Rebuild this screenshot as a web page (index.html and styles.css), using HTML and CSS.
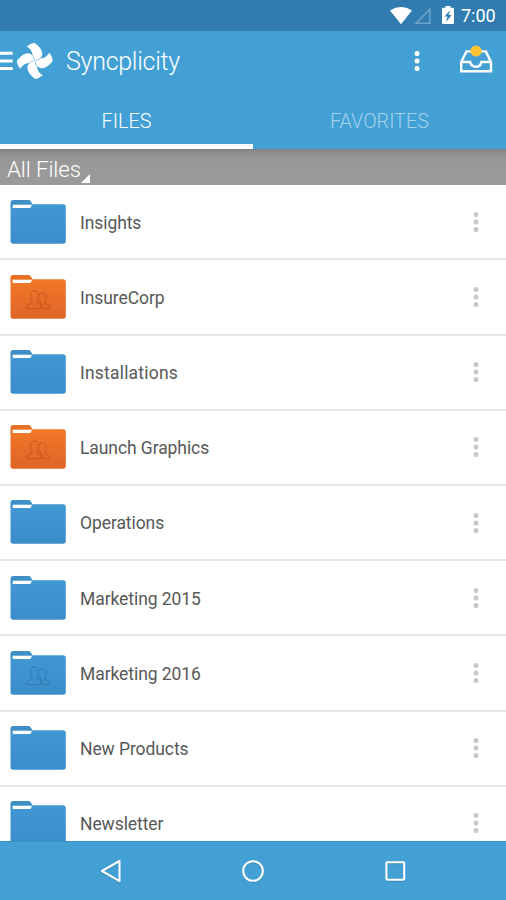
FILE: index.html
```html
<!DOCTYPE html>
<html lang="en">
<head>
<meta charset="utf-8">
<title>Syncplicity</title>
<link rel="stylesheet" href="styles.css">
</head>
<body>
<svg class="defs" aria-hidden="true">
  <defs>
    <linearGradient id="blue" x1="0" y1="0" x2="0" y2="1"><stop offset="0" stop-color="#4299d3"/><stop offset="1" stop-color="#3b8dca"/></linearGradient>
    <linearGradient id="orange" x1="0" y1="0" x2="0" y2="1"><stop offset="0" stop-color="#f47a29"/><stop offset="1" stop-color="#df6427"/></linearGradient>
    <symbol id="folder" viewBox="0 0 56 44">
      <path d="M3 0H18.5Q20 0 20.8 1.4L22.5 4.2H53Q55.8 4.2 55.8 7V41Q55.8 43.7 53 43.7H3.2Q.5 43.7 .5 41V3Q.5 0 3 0Z"/>
      <path d="M.5 3Q.5 0 3 0H18.5Q20 0 20.8 1.4L22.3 4.2H2.5V8H.5Z" fill="#000" opacity=".06"/>
      <path d="M2.7 4.7H22L20.5 7.9H2.7Z" fill="#fff"/>
    </symbol>
    <symbol id="people" viewBox="0 0 24 20">
      <path d="M14.6 18.7H1V16.3Q1 14.9 2.8 14.2L6.2 12.7V11.2C4.8 9.8 4.6 8.3 4.6 5.5C4.6 2.4 6.1 1 8.5 1S12.4 2.4 12.4 5.5C12.4 8.3 12.2 9.8 10.9 11.2V12.7L13 13.6Q14.6 14.4 14.6 16.3Z"/>
      <path d="M12.8 4.7Q14 3 16.7 3C19.1 3 20.3 4.4 20.3 6.9C20.3 9.2 20 10.6 18.9 11.8V13.2L21.8 14.5Q23.3 15.3 23.3 16.7V18.7H16.8M13.2 10.4Q13.6 11.3 14.3 12V13.4Q16.8 14.6 16.8 17V18.7"/>
    </symbol>
    <symbol id="more" viewBox="0 0 6 20"><circle cx="3" cy="2.6" r="2.5"/><circle cx="3" cy="10" r="2.5"/><circle cx="3" cy="17.4" r="2.5"/></symbol>
  </defs>
</svg>

<div class="screen">
  <div class="status">
    <svg class="wifi" viewBox="0 0 22 18"><path d="M0 3.4Q11-3.2 22 3.4L11 17.2Z" fill="#fff"/></svg>
    <svg class="signal" viewBox="0 0 18 18"><path d="M2.2 16.2H15.8V2.2Z" fill="none" stroke="#6fa5cb" stroke-width="1.5"/></svg>
    <svg class="battery" viewBox="0 0 12 18"><path d="M3.5 0H8.5V1.8H11Q12 1.8 12 2.8V17Q12 18 11 18H1Q0 18 0 17V2.8Q0 1.8 1 1.8H3.5Z" fill="#fff"/><path d="M8.2 4L2.6 10.6H5.5L4 16L9.7 9.1H6.6Z" fill="#307cb1"/></svg>
    <span class="clock">7:00</span>
  </div>

  <header class="appbar">
    <svg class="menu" viewBox="0 0 13 20"><path d="M0 2.3H12.7M0 10H12.7M0 17.5H12.7" stroke="#fff" stroke-width="3"/></svg>
    <svg class="logo" viewBox="0 0 36 38" fill="#fff">
      <path id="blade" d="M17.6 18.6C17.9 16.5 17.2 15 15.6 13.4C15.2 9.2 13.6 6.8 9.8 4.4Q13.2 1.3 17.4 .7Q25.4 6.2 25.3 12.8C24.6 15.6 22.2 17.8 17.6 18.6Z"/>
      <use href="#blade" transform="rotate(90 17.8 18.8)"/>
      <use href="#blade" transform="rotate(180 17.8 18.8)"/>
      <use href="#blade" transform="rotate(270 17.8 18.8)"/>
    </svg>
    <h1 class="title">Syncplicity</h1>
    <svg class="overflow"><use href="#more"/></svg>
    <svg class="inbox" viewBox="0 0 34 30">
      <path d="M2.2 17L7.5 6.4H26.8L32 17V26.2H2.2ZM2.2 17H11.2Q12.2 21.7 17 21.7T22.3 17H32" fill="none" stroke="#fff" stroke-width="2.4"/>
      <circle cx="17" cy="6" r="5.6" fill="#fdc133"/>
    </svg>
  </header>

  <nav class="tabs">
    <a class="tab active">FILES</a>
    <a class="tab">FAVORITES</a>
  </nav>

  <div class="path"><span>All Files</span><svg class="corner" viewBox="0 0 9 9"><path d="M9 0V9H0Z" fill="#fff"/></svg></div>

  <main class="list">
    <div class="row"><div class="icon blue"><svg class="folder"><use href="#folder"/></svg></div><span class="name">Insights</span><svg class="more"><use href="#more"/></svg></div>
    <div class="row"><div class="icon orange"><svg class="folder"><use href="#folder"/></svg><svg class="people"><use href="#people"/></svg></div><span class="name">InsureCorp</span><svg class="more"><use href="#more"/></svg></div>
    <div class="row"><div class="icon blue"><svg class="folder"><use href="#folder"/></svg></div><span class="name spaced">Installations</span><svg class="more"><use href="#more"/></svg></div>
    <div class="row"><div class="icon orange"><svg class="folder"><use href="#folder"/></svg><svg class="people"><use href="#people"/></svg></div><span class="name">Launch Graphics</span><svg class="more"><use href="#more"/></svg></div>
    <div class="row"><div class="icon blue"><svg class="folder"><use href="#folder"/></svg></div><span class="name">Operations</span><svg class="more"><use href="#more"/></svg></div>
    <div class="row"><div class="icon blue"><svg class="folder"><use href="#folder"/></svg></div><span class="name">Marketing 2015</span><svg class="more"><use href="#more"/></svg></div>
    <div class="row"><div class="icon blue"><svg class="folder"><use href="#folder"/></svg><svg class="people"><use href="#people"/></svg></div><span class="name">Marketing 2016</span><svg class="more"><use href="#more"/></svg></div>
    <div class="row"><div class="icon blue"><svg class="folder"><use href="#folder"/></svg></div><span class="name">New Products</span><svg class="more"><use href="#more"/></svg></div>
    <div class="row"><div class="icon blue"><svg class="folder"><use href="#folder"/></svg></div><span class="name">Newsletter</span><svg class="more"><use href="#more"/></svg></div>
  </main>

  <footer class="navbar">
    <svg viewBox="0 0 26 26"><path d="M4 13L21.5 3V23.2Z"/></svg>
    <svg viewBox="0 0 26 26"><circle cx="13" cy="13" r="9.8"/></svg>
    <svg viewBox="0 0 26 26"><rect x="4.4" y="4.2" width="17.8" height="17.6" rx=".7"/></svg>
  </footer>
</div>
</body>
</html>
```

FILE: styles.css
```css
* { box-sizing: border-box; }
body { margin: 0; font-family: Roboto, "Liberation Sans", sans-serif; background: #fff; }
svg { display: block; flex: none; }
.defs { position: absolute; width: 0; height: 0; }
.screen { width: 506px; height: 900px; display: flex; flex-direction: column; overflow: hidden; }

.status { height: 31px; flex: none; background: #307cb1; display: flex; align-items: center; padding: 0 10px 0 390px; color: #fff; }
.wifi { width: 22px; height: 18px; }
.signal { width: 18px; height: 18px; margin-left: 2px; }
.battery { width: 12px; height: 18px; margin-left: 10px; margin-top: -1px; }
.clock { margin-left: 7px; font-size: 18px; font-weight: 400; line-height: 31px; white-space: nowrap; }

.appbar { height: 60px; flex: none; background: #42a0d5; display: flex; align-items: center; color: #fff; }
.menu { width: 13px; height: 20px; }
.logo { width: 36px; height: 38px; margin-left: 4px; margin-top: -1px; }
.title { margin: 1px 0 0 13px; width: 349px; font-size: 25px; letter-spacing: -.27px; font-weight: 300; line-height: 60px; }
.overflow { width: 6px; height: 20px; margin-left: -.7px; margin-top: -1px; fill: #fff; }
.inbox { width: 34px; height: 30px; margin-left: 38.9px; margin-top: -3px; }

.tabs { height: 58px; flex: none; background: #42a0d5; display: flex; }
.tab { flex: 1; text-align: center; font-size: 19.8px; font-weight: 300; line-height: 61px; color: #a5d1eb; }
.tab.active { color: #fff; border-bottom: 5px solid #fafafa; }

.path { height: 36.7px; flex: none; display: flex; padding-left: 7px; background: linear-gradient(#828282, #929292 6px, #999 14px); border-bottom: 1px solid #aaa; color: #fff; font-size: 22.3px; letter-spacing: -.1px; font-weight: 300; line-height: 40px; }
.corner { width: 9px; height: 9px; margin-top: 25px; }

.list { flex: 1; min-height: 0; overflow: hidden; margin-top: -.5px; }
.row { height: 75.2px; display: flex; align-items: center; padding-left: 10px; background: linear-gradient(to top, #e6e6e6 1.6px, #fff 1.6px); }
.icon { width: 56px; height: 44px; margin-top: -2.4px; display: grid; flex: none; }
.icon > svg { grid-area: 1 / 1; }
.folder { width: 56px; height: 44px; }
.blue { fill: url(#blue); stroke: none; }
.orange { fill: url(#orange); }
.people { width: 24px; height: 20px; margin: 15px 0 0 16px; fill: none; stroke-width: 1; stroke: #2e79b0; }
.orange .people { stroke: #c35420; }
.name { width: 393.3px; margin-left: 14px; margin-top: -.2px; font-size: 17.5px; letter-spacing: -.08px; line-height: 24px; color: #585858; }
.name.spaced { letter-spacing: .2px; }
.more { width: 6px; height: 20px; fill: #c9c9c9; margin-top: -2px; }

.navbar { height: 59px; flex: none; background: #42a0d5; border-top: 1px solid #388fc3; display: flex; justify-content: center; align-items: center; gap: 116px; }
.navbar svg { width: 26px; height: 26px; margin-top: -1px; fill: none; stroke: #fff; stroke-width: 2.1; stroke-linejoin: round; filter: drop-shadow(0 1px 0 rgb(0 0 0 / .15)); }
```
